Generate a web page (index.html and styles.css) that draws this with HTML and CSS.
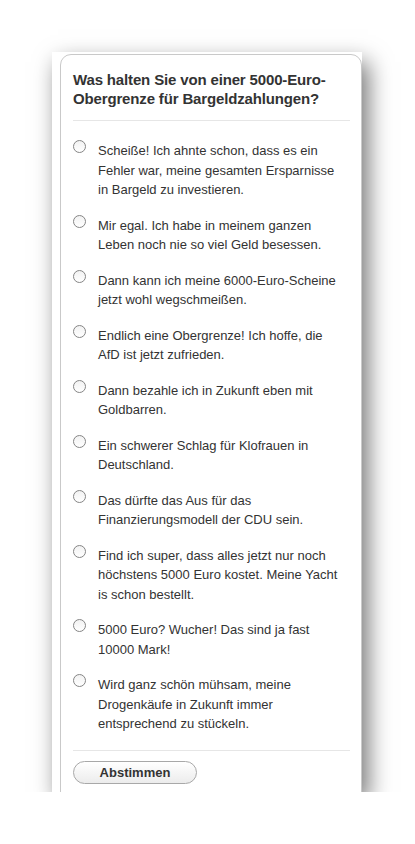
FILE: index.html
```html
<!DOCTYPE html>
<html lang="de">
<head>
<meta charset="utf-8">
<title>Umfrage</title>
<link rel="stylesheet" href="styles.css">
</head>
<body>
<div class="shot">
  <form class="poll">
    <h2 class="poll-title">Was halten Sie von einer 5000-Euro-Obergrenze für Bargeldzahlungen?</h2>
    <ul class="options">
      <li class="option"><span class="radio"></span><span class="label">Scheiße! Ich ahnte schon, dass es ein Fehler war, meine gesamten Ersparnisse in Bargeld zu investieren.</span></li>
      <li class="option"><span class="radio"></span><span class="label">Mir egal. Ich habe in meinem ganzen Leben noch nie so viel Geld besessen.</span></li>
      <li class="option"><span class="radio"></span><span class="label">Dann kann ich meine 6000-Euro-Scheine jetzt wohl wegschmeißen.</span></li>
      <li class="option"><span class="radio"></span><span class="label">Endlich eine Obergrenze! Ich hoffe, die AfD ist jetzt zufrieden.</span></li>
      <li class="option"><span class="radio"></span><span class="label">Dann bezahle ich in Zukunft eben mit Goldbarren.</span></li>
      <li class="option"><span class="radio"></span><span class="label">Ein schwerer Schlag für Klofrauen in Deutschland.</span></li>
      <li class="option"><span class="radio"></span><span class="label">Das dürfte das Aus für das Finanzierungsmodell der CDU sein.</span></li>
      <li class="option"><span class="radio"></span><span class="label">Find ich super, dass alles jetzt nur noch höchstens 5000 Euro kostet. Meine Yacht is schon bestellt.</span></li>
      <li class="option"><span class="radio"></span><span class="label">5000 Euro? Wucher! Das sind ja fast 10000 Mark!</span></li>
      <li class="option"><span class="radio"></span><span class="label">Wird ganz schön mühsam, meine Drogenkäufe in Zukunft immer entsprechend zu stückeln.</span></li>
    </ul>
    <div class="actions">
      <span class="button">Abstimmen</span>
    </div>
  </form>
</div>
</body>
</html>
```
FILE: styles.css
```css
html, body {
  margin: 0;
  padding: 0;
  background: #ffffff;
}

body {
  font-family: "Liberation Sans", Arial, sans-serif;
  color: #333333;
}

.shot {
  margin: 52px 0 0 52px;
  width: 310px;
  height: 740px;
  overflow: hidden;
  background: #ffffff;
  box-shadow: 6px 10px 22px rgba(0, 0, 0, 0.55);
}

.poll {
  margin: 2px 0 0 8px;
  width: 302px;
  box-sizing: border-box;
  border: 1px solid #c9c9c9;
  border-radius: 11px;
  padding: 15px 11px 30px 12px;
}

.poll-title {
  margin: 0;
  font-size: 15px;
  line-height: 19px;
  font-weight: bold;
  letter-spacing: -0.15px;
  color: #333333;
  padding-bottom: 12px;
  border-bottom: 1px solid #e6e6e6;
}

.options {
  list-style: none;
  margin: 0;
  padding: 20px 0 16px;
  display: flex;
  flex-direction: column;
  gap: 16px;
  border-bottom: 1px solid #e6e6e6;
}

.option {
  display: flex;
  align-items: flex-start;
  font-size: 13px;
  line-height: 19.5px;
}

.radio {
  flex: none;
  width: 13px;
  height: 13px;
  box-sizing: border-box;
  border: 1px solid #858585;
  border-radius: 50%;
  background: linear-gradient(#f2f2f2, #ffffff);
  margin: 0 12px 0 0;
  position: relative;
  top: -1px;
}

.label {
  flex: none;
  width: 245px;
}

.actions {
  padding-top: 10px;
}

.button {
  display: inline-flex;
  align-items: center;
  justify-content: center;
  width: 124px;
  height: 23px;
  box-sizing: border-box;
  border: 1px solid #a8a8a8;
  border-radius: 12px;
  background: linear-gradient(#ffffff, #ececec);
  font-size: 13px;
  font-weight: bold;
  color: #333333;
}
```
